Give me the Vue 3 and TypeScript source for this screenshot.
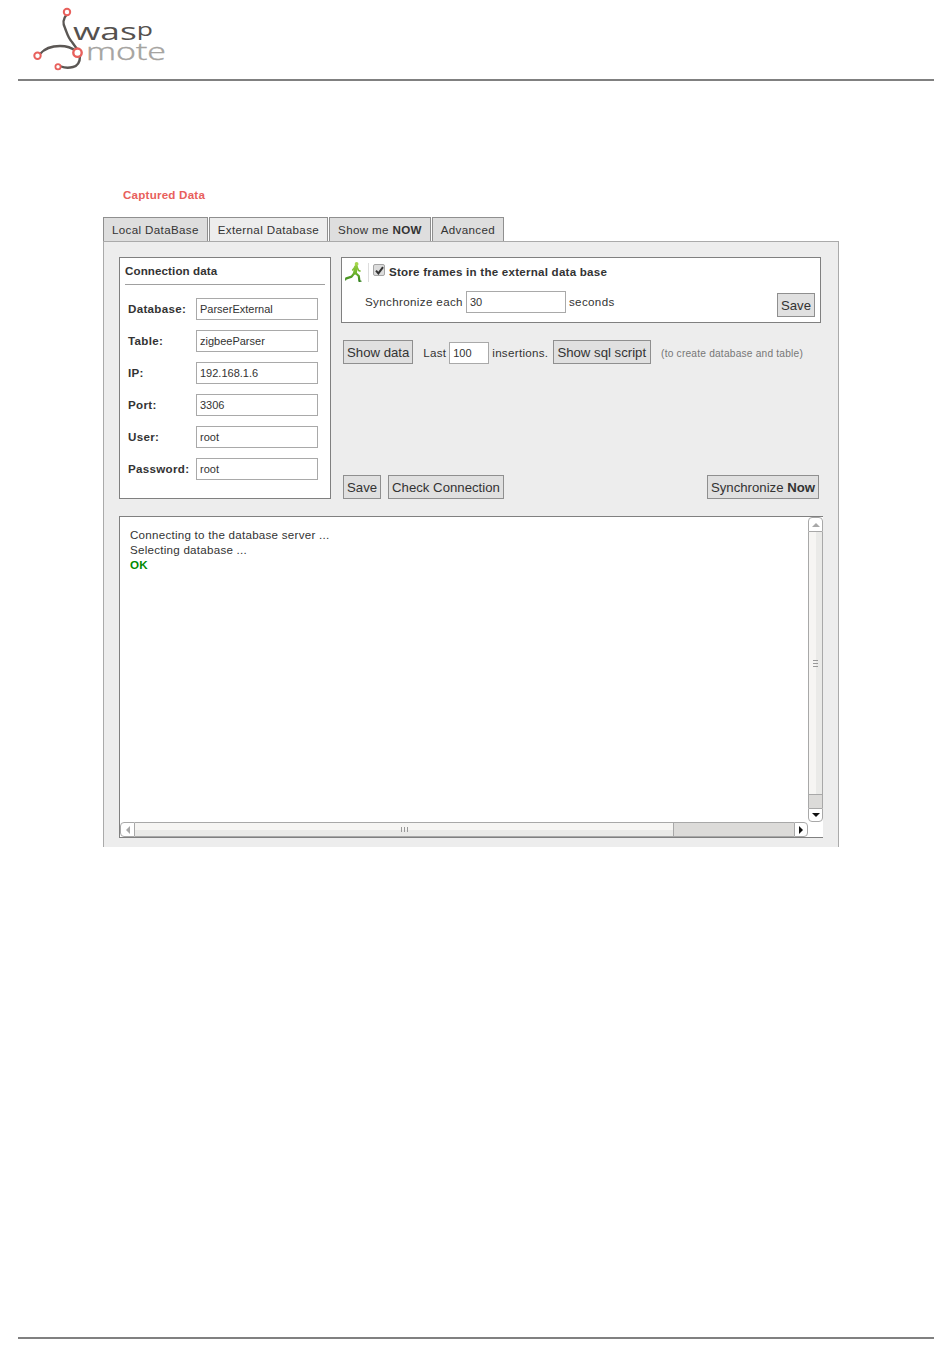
<script setup lang="ts">
const tabs = [
  { id: 'local', label: 'Local DataBase', strong: '' },
  { id: 'external', label: 'External Database', strong: '', active: true },
  { id: 'now', label: 'Show me ', strong: 'NOW' },
  { id: 'advanced', label: 'Advanced', strong: '' },
]
const fields = [
  { label: 'Database:', value: 'ParserExternal' },
  { label: 'Table:', value: 'zigbeeParser' },
  { label: 'IP:', value: '192.168.1.6' },
  { label: 'Port:', value: '3306' },
  { label: 'User:', value: 'root' },
  { label: 'Password:', value: 'root' },
]
</script>

<template>
  <div class="page">
    <header class="header">
      <svg class="logo" width="150" height="74" viewBox="0 0 150 74" aria-label="Waspmote logo">
        <g fill="none" stroke="#5b5754" stroke-width="2.4" stroke-linecap="round">
          <path d="M49 14 C44 20 45 24 47 28 C49 33 50 38 54 42 L59 49" />
          <path d="M22 54 C27 48 34 46 42 46 C48 46 53 47 58 51" />
          <path d="M62 56 C62 62 59 66 55 67 C51 68 47 68 43 66.5" />
        </g>
        <g fill="#fff" stroke="#e8605c">
          <circle cx="49" cy="12" r="3.2" stroke-width="2" />
          <circle cx="19.5" cy="55.7" r="3.2" stroke-width="2" />
          <circle cx="40" cy="66.7" r="2.6" stroke-width="1.8" />
          <circle cx="59.5" cy="52.7" r="4.2" stroke-width="2.4" />
        </g>
        <text class="logo-wasp" x="55" y="39.5" textLength="80" lengthAdjust="spacingAndGlyphs">was<tspan class="logo-p" dy="-4">p</tspan></text>
        <text class="logo-mote" x="68" y="59.5" textLength="80" lengthAdjust="spacingAndGlyphs">mote</text>
      </svg>
    </header>

    <main class="main">
      <h1 class="title">Captured Data</h1>

      <nav class="tabs">
        <div v-for="tab in tabs" :key="tab.id" class="tab" :class="{ active: tab.active }">
          {{ tab.label }}<b v-if="tab.strong">{{ tab.strong }}</b>
        </div>
      </nav>

      <section class="panel">
        <div class="top">
          <div class="box conn">
            <h2 class="conn-title">Connection data</h2>
            <div class="fields">
              <label v-for="f in fields" :key="f.label" class="field">
                <span class="field-label">{{ f.label }}</span>
                <span class="input field-input">{{ f.value }}</span>
              </label>
            </div>
          </div>

          <div class="right">
            <div class="box store">
              <div class="store-head">
                <svg class="runner" width="20" height="20" viewBox="0 0 20 20">
                  <defs>
                    <linearGradient id="runnerGreen" gradientUnits="userSpaceOnUse" x1="0" y1="0" x2="0" y2="20">
                      <stop offset="0" stop-color="#a6d64a" />
                      <stop offset="0.55" stop-color="#6fb52c" />
                      <stop offset="1" stop-color="#2f7d1e" />
                    </linearGradient>
                  </defs>
                  <circle cx="11.6" cy="2" r="1.9" fill="#a6d64a" />
                  <g fill="none" stroke="url(#runnerGreen)" stroke-linecap="round" stroke-linejoin="round">
                    <path d="M11 4.8 L10 10.6" stroke-width="3.8" />
                    <path d="M11.8 4.6 L13.6 8.4 L15 9" stroke-width="1.6" />
                    <path d="M10 5 L7.6 8" stroke-width="1.5" />
                    <path d="M9.4 11 L6.6 14.6 L1.4 16.4" stroke-width="2.2" />
                    <path d="M10.6 11 L13.8 14 L14.4 18.8" stroke-width="2.2" />
                    <path d="M14.4 19.2 L16 19.2" stroke-width="1.2" />
                    <path d="M1 16.2 L.6 18" stroke-width="1.2" />
                  </g>
                </svg>
                <span class="store-sep"></span>
                <span class="check">
                  <svg width="9" height="9" viewBox="0 0 9 9"><path d="M1 4.6 L3.4 7.4 L8 1.2" fill="none" stroke="#333" stroke-width="2" /></svg>
                </span>
                <b class="store-title">Store frames in the external data base</b>
              </div>
              <div class="store-sync">
                <span class="sync-text">Synchronize each</span>
                <span class="input sync-input">30</span>
                <span class="sync-text">seconds</span>
                <button class="btn store-save" type="button">Save</button>
              </div>
            </div>

            <div class="mid">
              <button class="btn" type="button">Show data</button>
              <span class="last">Last</span>
              <span class="input last-input">100</span>
              <span class="insertions">insertions.</span>
              <button class="btn sql" type="button">Show sql script</button>
              <small class="hint">(to create database and table)</small>
            </div>

            <div class="actions">
              <button class="btn" type="button">Save</button>
              <button class="btn" type="button">Check Connection</button>
              <button class="btn sync-now" type="button">Synchronize <b>Now</b></button>
            </div>
          </div>
        </div>

        <div class="log">
          <div class="log-text">
            <div>Connecting to the database server ...</div>
            <div>Selecting database ...</div>
            <div class="ok">OK</div>
          </div>

          <div class="vbar">
            <span class="sb-btn up"><i class="arrow arrow-up"></i></span>
            <span class="vthumb"><i class="vgrip"></i></span>
            <span class="vtrough"></span>
            <span class="sb-btn down"><i class="arrow arrow-down"></i></span>
          </div>

          <div class="hbar">
            <span class="sb-btn left"><i class="arrow arrow-left"></i></span>
            <span class="hthumb"><i class="hgrip"></i></span>
            <span class="htrough"></span>
            <span class="sb-btn right"><i class="arrow arrow-right"></i></span>
          </div>
        </div>
      </section>
    </main>

    <footer class="footer"></footer>
  </div>
</template>

<style>
html, body { margin: 0; background: #fff; }
</style>

<style scoped>
.page {
  width: 950px;
  height: 1369px;
  display: flex;
  flex-direction: column;
  font-family: "Liberation Sans", Arial, sans-serif;
  font-size: 11.6px;
  letter-spacing: 0.25px;
  color: #333;
  box-sizing: border-box;
}
b { letter-spacing: 0.2px; }
.header {
  margin: 0 16px 0 18px;
  height: 81px;
  box-sizing: border-box;
  border-bottom: 2px solid #808080;
  display: flex;
  align-items: flex-start;
}
.logo { display: block; }
.logo-wasp { font-family: "Open Sans", sans-serif; font-weight: 400; font-size: 24px; fill: #55514e; letter-spacing: 0; }
.logo-p { font-size: 18px; }
.logo-mote { font-family: "Open Sans", sans-serif; font-weight: 300; font-size: 24px; fill: #a5a3a0; stroke: #a5a3a0; stroke-width: 0.4px; letter-spacing: 0; }

.main {
  flex: 1;
  padding: 107px 0 0 103px;
  width: 736px;
}
.title {
  margin: 0 0 15px 20px;
  font-size: 11.6px;
  letter-spacing: 0.22px;
  line-height: 14px;
  font-weight: 700;
  color: #e8605c;
}
.tabs { display: flex; gap: 1px; height: 24px; }
.tab {
  box-sizing: border-box;
  height: 24px;
  padding: 0 8px;
  border: 1px solid #8f8f8f;
  border-bottom: 0;
  background: #dedede;
  line-height: 24px;
  letter-spacing: 0.35px;
  white-space: nowrap;
}
.tab.active { background: #ededed; }
.tab b { color: #333; letter-spacing: 0.3px; }

.panel {
  box-sizing: border-box;
  height: 606px;
  background: #ededed;
  border: 1px solid #aaa;
  border-bottom: 0;
  padding: 15px 15px 0;
}
.box {
  box-sizing: border-box;
  background: #fff;
  border: 1px solid #808080;
}
.top { display: flex; gap: 10px; height: 242px; }
.conn { width: 212px; padding: 0 5px; }
.conn-title {
  box-sizing: border-box;
  margin: 0;
  height: 27px;
  line-height: 25px;
  font-size: 11.6px;
  letter-spacing: 0.1px;
  font-weight: 700;
  border-bottom: 1px solid #a0a0a0;
}
.fields { display: flex; flex-direction: column; gap: 10px; padding: 13px 7px 0 3px; }
.field { display: flex; align-items: center; height: 22px; }
.field-label { width: 68px; font-weight: 700; letter-spacing: 0.3px; margin-top: -2px; }
.input {
  box-sizing: border-box;
  display: block;
  height: 22px;
  background: #fff;
  border: 1px solid #a9a9a9;
  padding-left: 3px;
  line-height: 20px;
  font-size: 11px;
  letter-spacing: 0;
}
.field-input { width: 122px; }

.right { flex: 1; display: flex; flex-direction: column; }
.store { height: 66px; width: 480px; padding: 4px 5px 0 3px; }
.store-head { display: flex; align-items: center; height: 20px; }
.runner { display: block; }
.store-sep { width: 1px; height: 19px; background: #ddd; margin: 0 4px 0 3px; }
.check {
  box-sizing: border-box;
  width: 12px;
  height: 12px;
  margin: -4px 4px 0 0;
  border: 1px solid #a5a5a5;
  border-radius: 2px;
  background: #dcdcdc;
  display: flex;
  align-items: center;
  justify-content: center;
}
.store-title { margin-top: -2px; letter-spacing: 0.23px; }
.store-sync { display: flex; align-items: center; gap: 3px; margin-top: 9px; padding-left: 20px; height: 22px; }
.sync-text { letter-spacing: 0.36px; margin-top: -2px; }
.sync-input { width: 100px; }

.btn {
  box-sizing: border-box;
  height: 24px;
  padding: 1px 3px 0;
  margin: 0;
  background: #e0e0e0;
  border: 1px solid #8f8f8f;
  border-radius: 0;
  font-family: inherit;
  font-size: 13.2px;
  letter-spacing: 0;
  color: #333;
  line-height: 21px;
}
.btn b { letter-spacing: 0; }
.store-save { margin: 6px 0 0 auto; }
.mid { display: flex; align-items: center; padding: 17px 0 0 2px; height: 24px; }
.last { margin: 1px 3px 0 10px; }
.last-input { width: 40px; height: 22px; margin: 2px 3px 0 0; }
.insertions { letter-spacing: 0.3px; margin-top: 1px; }
.btn.sql { margin-left: 5px; padding-right: 4px; }
.hint { margin: 2px 0 0 10px; font-size: 10.2px; letter-spacing: 0.2px; color: #777; }
.actions { margin-top: auto; display: flex; gap: 7px; padding: 0 4px 0 2px; }
.sync-now { margin-left: auto; }

.log {
  box-sizing: border-box;
  margin-top: 17px;
  width: 704px;
  height: 322px;
  background: #fff;
  border: 1px solid #808080;
  border-right: 0;
  display: grid;
  grid-template-columns: 688px 15px;
  grid-template-rows: 305px 15px;
}
.log-text { padding: 10px 10px; line-height: 15px; }
.ok { color: #008a00; font-weight: 700; }
.vbar { display: flex; flex-direction: column; }
.hbar { display: flex; grid-column: 1; grid-row: 2; }
.sb-btn {
  box-sizing: border-box;
  flex: none;
  background: #fff;
  border: 1px solid #a8a8a8;
  display: flex;
  align-items: center;
  justify-content: center;
}
.vbar .sb-btn { height: 15px; }
.hbar .sb-btn { width: 15px; }
.up { border-radius: 4px 4px 0 0; }
.vbar .down { border-radius: 0 0 4px 4px; height: 14px; }
.left { border-radius: 4px 0 0 4px; }
.hbar .right { border-radius: 0 4px 4px 0; width: 14px; flex: none; display: flex; }
.arrow { width: 0; height: 0; display: block; border: 4px solid transparent; }
.arrow-up { border-top: 0; border-bottom-color: #a8a8a8; }
.arrow-down { border-bottom: 0; border-top-color: #111; }
.arrow-left { border-left: 0; border-right-color: #a8a8a8; }
.arrow-right { border-right: 0; border-left-color: #111; }
.vthumb {
  box-sizing: border-box;
  height: 263px;
  border: 1px solid #a8a8a8;
  border-width: 0 1px 1px;
  background: linear-gradient(to right, #f6f5f3 50%, #eaeae8 50%);
  display: flex;
  align-items: center;
  justify-content: center;
}
.vtrough { flex: 1; background: #dcdbd9; border: 1px solid #a8a8a8; border-width: 0 1px; }
.hthumb {
  box-sizing: border-box;
  width: 539px;
  background: linear-gradient(to bottom, #f6f5f3 50%, #eaeae8 50%);
  border: 1px solid #a8a8a8;
  border-width: 1px 1px 1px 0;
  display: flex;
  align-items: center;
  justify-content: center;
}
.htrough { flex: 1; background: #dcdbd9; border: 1px solid #a8a8a8; border-width: 1px 0; }
.vgrip { width: 5px; height: 7px; background: repeating-linear-gradient(to bottom, #999 0 1px, transparent 1px 3px); }
.hgrip { width: 7px; height: 5px; background: repeating-linear-gradient(to right, #999 0 1px, transparent 1px 3px); }

.footer {
  margin: 0 16px 30px 18px;
  height: 2px;
  background: #808080;
}
</style>
